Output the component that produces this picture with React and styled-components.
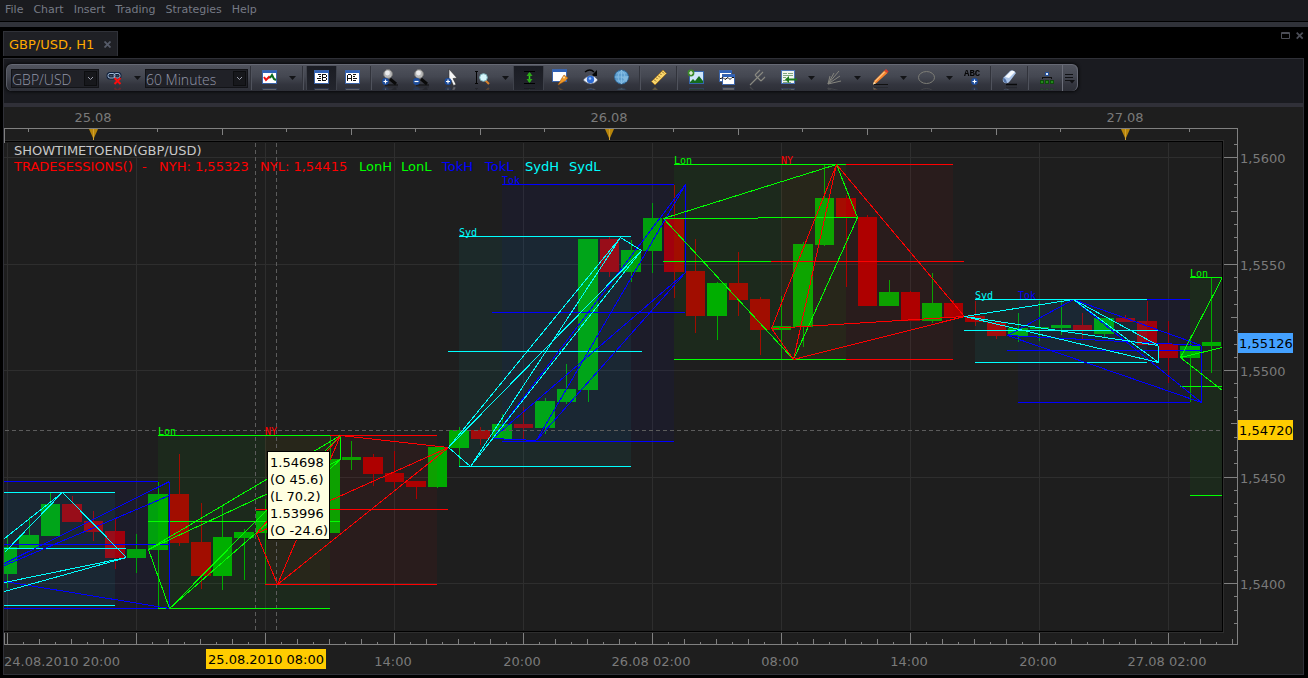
import React from 'react';
import styled, { createGlobalStyle } from 'styled-components';

const menus = ['File', 'Chart', 'Insert', 'Trading', 'Strategies', 'Help'];

const colors = {
  lon: '#00ff00',
  ny: '#ff0000',
  tok: '#0000ff',
  syd: '#00ffff',
};

// one candle per hour: body top, body bottom, wick top, wick bottom, up (1) or down (0)
const candles = [
  [547, 574, 537, 588, 1],
  [535, 548, 517, 548, 1],
  [504, 536, 493, 536, 1],
  [504, 522, 496, 522, 0],
  [521, 532, 511, 541, 0],
  [531, 558, 518, 569, 0],
  [549, 558, 534, 573, 1],
  [494, 550, 482, 608, 1],
  [494, 543, 454, 546, 0],
  [542, 576, 503, 589, 0],
  [537, 576, 505, 590, 1],
  [532, 538, 529, 580, 1],
  [511, 533, 499, 584, 1],
  [500, 512, 490, 530, 1],
  [490, 505, 480, 530, 0],
  [459, 533, 435, 533, 1],
  [457, 460, 441, 470, 1],
  [457, 474, 454, 486, 0],
  [473, 482, 451, 488, 0],
  [481, 487, 481, 499, 0],
  [447, 487, 447, 488, 1],
  [430, 448, 427, 466, 1],
  [430, 439, 427, 445, 0],
  [424, 439, 414, 439, 1],
  [424, 428, 407, 440, 0],
  [401, 428, 398, 434, 1],
  [389, 402, 364, 404, 1],
  [239, 390, 239, 402, 1],
  [239, 272, 237, 277, 0],
  [250, 272, 240, 282, 1],
  [218, 251, 203, 273, 1],
  [219, 272, 185, 298, 0],
  [271, 316, 239, 333, 0],
  [283, 316, 282, 340, 1],
  [283, 300, 252, 316, 0],
  [299, 330, 297, 355, 0],
  [326, 330, 296, 359, 1],
  [244, 327, 242, 347, 1],
  [198, 245, 165, 246, 1],
  [198, 217, 195, 287, 0],
  [217, 306, 215, 306, 0],
  [292, 306, 280, 306, 1],
  [292, 321, 291, 321, 0],
  [303, 321, 273, 323, 1],
  [303, 317, 300, 317, 0],
  [316, 322, 301, 326, 0],
  [322, 336, 322, 339, 0],
  [328, 336, 313, 342, 1],
  [327, 329, 301, 341, 1],
  [325, 328, 300, 335, 1],
  [325, 331, 313, 339, 0],
  [318, 334, 318, 338, 1],
  [318, 322, 315, 322, 0],
  [321, 345, 301, 345, 0],
  [344, 358, 321, 383, 0],
  [346, 358, 336, 402, 1],
  [342, 346, 278, 373, 1],
];

// box: left, right, high, low; mid: left, right, y; lines: x1, y1, x2, y2
const sessions = [
  {
    type: 'tok',
    box: [4, 158, 481, 608],
    mid: [4, 169, 544],
    lines: [
      [4, 563, 169, 481],
      [4, 565, 169, 495],
      [4, 581, 169, 608],
      [169, 481, 169, 608],
    ],
  },
  {
    type: 'syd',
    box: [4, 115, 492, 605],
    mid: [4, 126, 548],
    lines: [
      [4, 538, 62, 492],
      [4, 552, 62, 492],
      [62, 492, 126, 557],
      [4, 582, 126, 557],
      [4, 591, 126, 557],
    ],
  },
  {
    type: 'lon',
    label: 'Lon',
    box: [158, 330, 435, 608],
    mid: [148, 340, 521],
    points: [[148, 549], [169, 608], [340, 435], [340, 459]],
  },
  {
    type: 'ny',
    label: 'NY',
    box: [265, 437, 435, 584],
    mid: [256, 448, 509],
    points: [[256, 533], [277, 584], [340, 435], [448, 447]],
  },
  {
    type: 'tok',
    label: 'Tok',
    box: [502, 674, 184, 441],
    mid: [492, 685, 312],
    points: [[492, 438], [536, 440], [685, 184], [685, 272]],
  },
  {
    type: 'syd',
    label: 'Syd',
    box: [459, 631, 236, 466],
    mid: [448, 642, 351],
    points: [[448, 447], [470, 466], [620, 237], [641, 250]],
  },
  {
    type: 'lon',
    label: 'Lon',
    box: [674, 846, 164, 359],
    mid: [663, 771, 261],
    points: [[663, 218], [793, 359], [836, 164], [857, 217]],
  },
  {
    type: 'ny',
    label: 'NY',
    box: [781, 953, 164, 359],
    mid: [771, 964, 261],
    points: [[771, 328], [793, 359], [836, 164], [964, 316]],
  },
  {
    type: 'tok',
    label: 'Tok',
    box: [1018, 1190, 299, 402],
    mid: [1007, 1201, 350],
    points: [[1007, 335], [1201, 402], [1073, 299], [1201, 345]],
  },
  {
    type: 'syd',
    label: 'Syd',
    box: [975, 1147, 299, 362],
    mid: [964, 1158, 330],
    points: [[964, 316], [1158, 362], [1073, 299], [1158, 345]],
  },
  {
    type: 'lon',
    label: 'Lon',
    box: [1190, 1222, 277, 495],
    mid: [1180, 1222, 386],
    lines: [
      [1180, 357, 1222, 277],
      [1180, 357, 1222, 347],
      [1180, 357, 1222, 390],
    ],
  },
];

// London levels cover the New York ones, the New York trend lines cover the London ones
const levelOrder = ['ny', 'lon', 'tok', 'syd'];
const trendOrder = ['tok', 'syd', 'lon', 'ny'];

const legend = [
  [14, 'TRADESESSIONS()', colors.ny],
  [142, '-', colors.ny],
  [159, 'NYH: 1,55323', colors.ny],
  [260, 'NYL: 1,54415', colors.ny],
  [359, 'LonH', colors.lon],
  [401, 'LonL', colors.lon],
  [442, 'TokH', colors.tok],
  [485, 'TokL', colors.tok],
  [525, 'SydH', colors.syd],
  [569, 'SydL', colors.syd],
];

const priceGrid = [
  [157, '1,5600'],
  [264, '1,5550'],
  [370, '1,5500'],
  [477, '1,5450'],
  [583, '1,5400'],
];

const timeLabels = [
  [62, '24.08.2010 20:00'],
  [393, '14:00'],
  [522, '20:00'],
  [651, '26.08 02:00'],
  [780, '08:00'],
  [909, '14:00'],
  [1038, '20:00'],
  [1167, '27.08 02:00'],
];

const dayLabels = [
  [93, '25.08'],
  [609, '26.08'],
  [1125, '27.08'],
];

const tooltipLines = ['1.54698', '(O 45.6)', '(L 70.2)', '1.53996', '(O -24.6)'];

const range = (n) => Array.from({ length: n }, (_, i) => i);

const sortSessions = (order) =>
  [...sessions].sort((a, b) => order.indexOf(a.type) - order.indexOf(b.type));

const sessionLines = ({ lines, points }) => {
  if (lines) return lines;
  const [o, l, h, c] = points;
  return [
    [...o, ...l],
    [...o, ...h],
    [...o, ...c],
    [...l, ...h],
    [...l, ...c],
    [...h, ...c],
  ];
};

const Icon = ({ children, size = 18 }) => (
  <svg width={size} height={size} viewBox="0 0 18 18" fill="none" aria-hidden="true">
    {children}
  </svg>
);

const WindowFrame = ({ x = 1.5, y = 1.5, w = 14, h = 13 }) => (
  <g shapeRendering="crispEdges">
    <rect x={x} y={y} width={w} height={h} fill="#fff" stroke="#3c64a8" />
    <rect x={x} y={y} width={w} height="2" fill="#2f62b8" />
  </g>
);

const PlusBadge = ({ x, y, minus, color = '#1c4c9c' }) => (
  <>
    <circle cx={x} cy={y} r="3.4" fill={color} />
    <path d={`M${x - 2} ${y}h4${minus ? '' : `M${x} ${y - 2}v4`}`} stroke="#fff" strokeWidth="1.2" />
  </>
);

const Magnifier = ({ minus }) => (
  <Icon>
    <path d="M9 10l6 5" stroke="#0a0a0a" strokeWidth="3" />
    <path d="M4 16h13" stroke="#0a0a0a" />
    <circle cx="7" cy="5" r="4.4" fill="#b9b9b9" stroke="#777" />
    <circle cx="6.500" cy="4" r="2.400" fill="#ececec" />
    <PlusBadge x={4.5} y={12.5} minus={minus} />
  </Icon>
);

const LinkIcon = () => (
  <Icon>
    <rect x="2" y="4.500" width="7" height="4.500" rx="2" stroke="#10203c" strokeWidth="3" />
    <rect x="8" y="4.500" width="6" height="4.500" rx="2" stroke="#10203c" strokeWidth="3" />
    <rect x="2" y="4.500" width="7" height="4.500" rx="2" stroke="#9fb8d4" />
    <rect x="8" y="4.500" width="6" height="4.500" rx="2" stroke="#9fb8d4" />
    <path d="M8.500 9l6 6M14.500 9l-6 6" stroke="#ff0d0d" strokeWidth="2" />
  </Icon>
);

const ChartIcon = () => (
  <Icon>
    <WindowFrame />
    <path d="M3 8l2 3 3-3 1 1" stroke="#f01010" strokeWidth="2" />
    <path d="M9 9l2-3 2 4 2 1" stroke="#0b6b1c" strokeWidth="2" />
  </Icon>
);

const BidIcon = () => (
  <Icon>
    <WindowFrame />
    <path
      d="M5 5.500h3M6 7.500h2M4 9.500h4M5 11.500h3M9.500 5v7M10 5.500h3M10 8.500h3M10 11.500h3M13.500 6v2M13.500 9v2"
      stroke="#111"
      shapeRendering="crispEdges"
    />
  </Icon>
);

const AskIcon = () => (
  <Icon>
    <WindowFrame />
    <path
      d="M3.500 6v6M7.500 6v6M4 5.500h3M4 9.500h3M9 5.500h3M9 7.500h2M9 9.500h4M9 11.500h3"
      stroke="#111"
      shapeRendering="crispEdges"
    />
  </Icon>
);

const CursorIcon = () => (
  <Icon>
    <path d="M6 0l8 9-4 .5 3 6-2.500 1L8 11l-2 2z" fill="#f4f4f4" stroke="#333" strokeWidth=".6" />
    <PlusBadge x={5} y={12.5} />
  </Icon>
);

const RangeZoomIcon = () => (
  <Icon>
    <path d="M2.500 2v13M1 2.500h3M1 14.500h3" stroke="#050505" shapeRendering="crispEdges" />
    <path d="M11 11l4 4" stroke="#d9802a" strokeWidth="2" />
    <circle cx="9.500" cy="8.500" r="3.800" fill="#d6f6fb" stroke="#7fb5bd" />
  </Icon>
);

const AutoScaleIcon = () => (
  <Icon>
    <path d="M4 2.500h11M4 14.500h11" stroke="#000" shapeRendering="crispEdges" />
    <path d="M9.500 4v9" stroke="#37d11c" strokeWidth="1.600" />
    <path d="M6.500 7l3-4 3 4zM6.500 10l3 4 3-4z" fill="#2cab18" />
  </Icon>
);

const SettingsIcon = () => (
  <Icon>
    <WindowFrame y={0.5} h={12} />
    <path d="M7 16l4-7 2-3 4 3-3 3z" fill="#f09a28" stroke="#a85a10" strokeWidth=".6" />
    <circle cx="13" cy="8.500" r="1" fill="#ffe3a6" />
  </Icon>
);

const EyeIcon = () => (
  <Icon>
    <path d="M3 3q5-4 9 0" stroke="#050505" strokeWidth="1.300" />
    <path d="M15 1v6H9z" fill="#050505" />
    <path d="M1 11q8-9 15 0-7 8-15 0z" fill="#eef2f8" stroke="#4c5568" strokeWidth=".8" />
    <circle cx="8.500" cy="10.500" r="3.700" fill="#2f6cd4" />
    <circle cx="8" cy="9.500" r="1.300" fill="#9cc4ff" />
  </Icon>
);

const GlobeIcon = () => (
  <Icon>
    <circle cx="8.500" cy="8" r="7" fill="#5f9fd0" stroke="#2f6492" />
    <path
      d="M8.500 1v14M1.500 8h14M3.500 4h10M3.500 12h10M8.500 1q-7 7 0 14M8.500 1q7 7 0 14"
      stroke="#9fd0f0"
      strokeWidth=".5"
    />
    <path d="M8.500 8l7-1-2 6z" fill="#82b9df" />
  </Icon>
);

const RulerIcon = () => (
  <Icon>
    <path d="M1.500 12.500L13 1l3.500 3.500L5 16z" fill="#f9d56b" stroke="#a1701c" strokeWidth=".8" />
    <path d="M4 10.500l2 2M6 8.500l1.500 1.500M8 6.500l2 2M10 4.500l1.500 1.500M12 2.500l2 2" stroke="#6d4a10" strokeWidth=".8" />
  </Icon>
);

const ImageIcon = () => (
  <Icon>
    <rect x="2.500" y="2.500" width="14" height="12" fill="#cfe6fb" stroke="#3465ab" />
    <path d="M3 13l3-3 2 2 4-5 4 5v2H3z" fill="#156b1d" />
    <PlusBadge x={4} y={4} color="#3c8a2a" />
  </Icon>
);

const IndicatorIcon = () => (
  <Icon>
    <WindowFrame x={1.5} y={1.5} w={12} h={11} />
    <WindowFrame x={4.5} y={5.5} w={12} h={10} />
    <path d="M2 9.500h1l2-1 2 2 3-2 2 2 2-2h2" stroke="#111" />
  </Icon>
);

const PitchforkIcon = () => (
  <Icon>
    <path d="M1 16l8-8M6 6l6 6M6 6l5-5M9 8l5-5M12 12l4-4" stroke="#8a8a82" strokeWidth="1.100" />
  </Icon>
);

const TemplateIcon = () => (
  <Icon>
    <rect x="1.500" y="1.500" width="13" height="13" fill="#eff5ef" stroke="#4a74b8" />
    <path d="M3 4.500h4M8 4.500h5M3 6.500h10M3 8.500h3M3 11.500h3M3 13.500h8" stroke="#7fa67f" />
    <path d="M17 10.500H8" stroke="#1b7a1b" strokeWidth="2" />
    <path d="M9 7v7l-4-3.500z" fill="#1b7a1b" />
  </Icon>
);

const FanIcon = () => (
  <Icon>
    <path d="M2 15L4 7M2 15L8 4M2 15L13 2M2 15l12-8M2 15l13-3" stroke="#85857e" />
  </Icon>
);

const PencilIcon = () => (
  <Icon>
    <path d="M2 15.500h14" stroke="#111" />
    <path d="M1 15.500L2.500 11.500 12.500 1.500l3 2.500L5 13.500z" fill="#f6812c" />
    <path d="M3 12.500l9.500-9.500" stroke="#ffc27c" strokeWidth="1.300" />
    <path d="M12.500 1.500L14 0l2.500 2.500L15.500 4z" fill="#e03c2c" />
    <path d="M1 15.500l1-3 2 2z" fill="#f3dca8" />
  </Icon>
);

const EllipseIcon = () => (
  <Icon>
    <ellipse cx="8.500" cy="8.500" rx="8" ry="6" stroke="#7d7d76" />
  </Icon>
);

const TextIcon = () => (
  <Icon>
    <text x="0" y="7" fontSize="9" fontFamily="Liberation Mono, monospace" fontWeight="bold" fill="#050505">
      ABC
    </text>
    <PlusBadge x={10.5} y={12.5} />
  </Icon>
);

const EraserIcon = () => (
  <Icon>
    <path d="M5 15.500h11" stroke="#08090b" strokeWidth="1.500" />
    <path d="M2 9l7-7q3-2 6 2l-6 8q-2 3-5 2-3-1-2-5z" fill="#a9c2e6" />
    <path d="M4 8l6-6q2-1 4 1L8 9z" fill="#f7fbff" />
    <path d="M2 9q3 0 4 5-4 0-4-5z" fill="#5372a4" />
  </Icon>
);

const TreeIcon = () => (
  <Icon>
    <g shapeRendering="crispEdges">
      <path d="M4.500 10V8.500h9V10" stroke="#111" />
      <rect x="7.500" y="3.500" width="3" height="3" fill="#dcecff" stroke="#234f98" />
      <rect x="2.500" y="11.500" width="3" height="3" fill="#258a1c" stroke="#0d4d0b" />
      <rect x="7.500" y="11.500" width="3" height="3" fill="#258a1c" stroke="#0d4d0b" />
      <rect x="12.500" y="11.500" width="3" height="3" fill="#258a1c" stroke="#0d4d0b" />
    </g>
  </Icon>
);

const tools = [
  { name: 'Chart type', icon: <ChartIcon />, menu: true },
  { divider: true },
  { name: 'Bid', icon: <BidIcon />, pressed: true },
  { name: 'Ask', icon: <AskIcon /> },
  { divider: true },
  { name: 'Zoom in', icon: <Magnifier /> },
  { name: 'Zoom out', icon: <Magnifier minus /> },
  { name: 'Cursor', icon: <CursorIcon /> },
  { name: 'Zoom to range', icon: <RangeZoomIcon />, menu: true },
  { name: 'Auto scale', icon: <AutoScaleIcon />, pressed: true },
  { name: 'Chart settings', icon: <SettingsIcon /> },
  { name: 'Show or hide', icon: <EyeIcon /> },
  { name: 'Sessions', icon: <GlobeIcon /> },
  { divider: true },
  { name: 'Measure', icon: <RulerIcon /> },
  { divider: true },
  { name: 'Save image', icon: <ImageIcon /> },
  { name: 'Add indicator', icon: <IndicatorIcon /> },
  { name: 'Pitchfork', icon: <PitchforkIcon /> },
  { name: 'Templates', icon: <TemplateIcon />, menu: true },
  { name: 'Fan', icon: <FanIcon />, menu: true },
  { name: 'Line', icon: <PencilIcon />, menu: true },
  { name: 'Shape', icon: <EllipseIcon />, menu: true },
  { name: 'Text', icon: <TextIcon /> },
  { divider: true },
  { name: 'Clear', icon: <EraserIcon /> },
  { divider: true },
  { name: 'Objects', icon: <TreeIcon /> },
];

const MenuArrow = ({ label }) => (
  <ArrowButton type="button" aria-label={`${label} options`}>
    <svg width="7" height="4" viewBox="0 0 7 4">
      <path d="M0 0h7L3.500 4z" fill="#131417" />
    </svg>
  </ArrowButton>
);

const Combo = ({ label, value, width }) => (
  <ComboBox $width={width}>
    <select aria-label={label} defaultValue={value}>
      <option>{value}</option>
    </select>
    <ComboArrow>
      <svg width="7" height="5" viewBox="0 0 7 5" fill="none">
        <path d="M1 1l2.500 2.500L6 1" stroke="#9a9daa" />
      </svg>
    </ComboArrow>
  </ComboBox>
);

const SessionLevels = ({ session: { type, box, mid } }) => {
  const [left, right, top, bottom] = box;
  return (
    <g fill={colors[type]}>
      <rect x={left} y={top} width={right - left} height="1" />
      <rect x={left} y={bottom} width={right - left} height="1" />
      <rect x={mid[0]} y={mid[2]} width={mid[1] - mid[0]} height="1" />
    </g>
  );
};

const SessionTrends = ({ session }) => (
  <g stroke={colors[session.type]} transform="translate(.5 .5)">
    {sessionLines(session).map(([x1, y1, x2, y2], i) => (
      <line key={i} x1={x1} y1={y1} x2={x2} y2={y2} />
    ))}
  </g>
);

const Axes = () => (
  <g transform="translate(.5 .5)" stroke="#808080" fill="none" shapeRendering="crispEdges">
    <path d="M4 142V128H1237V644H4V632" />
    {range(19).map((i) => (
      <path key={i} d={`M${Math.floor(28.5 + i * 64.5)} 128v${i % 2 ? 6 : 3}`} />
    ))}
    {range(37).map((i) => {
      const y = Math.round(144 + i * 13.3);
      const step = (i + 7) % 8;
      return <path key={i} d={`M1237 ${y}h-${step === 0 ? 14 : step === 4 ? 7 : 4}`} />;
    })}
    {range(77).map((i) => {
      const x = Math.floor(7 + i * 16.125);
      return <path key={i} d={`M${x} 644v-${i % 8 === 0 ? 12 : i % 2 === 0 ? 6 : 3}`} />;
    })}
  </g>
);

const PriceChart = () => (
  <ChartSvg viewBox="4 107 1299 567" role="img" aria-label="GBP/USD hourly chart">
    <defs>
      <clipPath id="plot">
        <rect x="4" y="142" width="1218" height="489" />
      </clipPath>
    </defs>

    <rect x="4" y="140" width="1220" height="1" fill="#2e2e2e" />
    <rect x="1223" y="140" width="1" height="493" fill="#2e2e2e" />
    <rect x="4" y="632" width="1220" height="1" fill="#2e2e2e" />
    <path d="M4 141.500H1222.500V631.500H4" stroke="#000" fill="none" shapeRendering="crispEdges" />

    <g clipPath="url(#plot)" shapeRendering="crispEdges">
      {priceGrid.map(([y]) => (
        <rect key={y} x="4" y={y} width="1217" height="1" fill="#2e2e2e" />
      ))}
      {range(10).map((i) => (
        <rect key={i} x={7 + i * 129} y="143" width="1" height="487" fill="#2e2e2e" />
      ))}

      {candles.map(([top, bottom, high, low, up], i) => {
        const x = Math.floor(7.5 + i * 21.5);
        const odd = i % 2;
        return (
          <g key={i} fill={up ? '#00aa00' : '#aa0000'}>
            <rect x={x} y={high} width="1" height={low - high} />
            <rect x={x - (odd ? 10 : 9)} y={top} width={odd ? 20 : 19} height={bottom - top} />
          </g>
        );
      })}

      {sessions.map(({ type, box: [left, right, top, bottom] }, i) => (
        <rect
          key={i}
          x={left}
          y={top}
          width={right - left}
          height={bottom - top}
          fill={colors[type]}
          fillOpacity=".05"
        />
      ))}

      <g transform="translate(.5 .5)" stroke="#5c5c5c" strokeDasharray="4 3">
        <path d="M255 142V631" />
        <path d="M276 142V631" />
        <path d="M4 430H1222" />
      </g>

      {sortSessions(levelOrder).map((session, i) => (
        <SessionLevels key={i} session={session} />
      ))}
      {sortSessions(trendOrder).map((session, i) => (
        <SessionTrends key={i} session={session} />
      ))}
    </g>

    <SessionLabels>
      {sessions
        .filter((s) => s.label)
        .map((s, i) => (
          <text key={i} x={s.box[0]} y={s.box[2]} fill={colors[s.type]}>
            {s.label}
          </text>
        ))}
    </SessionLabels>

    <Axes />

    {dayLabels.map(([x]) => (
      <g key={x}>
        <path d={`M${x - 4} 129h9l-4 9h-1z`} fill="#b8860b" />
        <path d={`M${x}.5 129v11`} stroke="#d0a030" />
      </g>
    ))}

    <ChartText>
      <text x="14" y="155" fill="#c8c8c8">
        SHOWTIMETOEND(GBP/USD)
      </text>
      {legend.map(([x, text, color]) => (
        <text key={x} x={x} y="171" fill={color}>
          {text}
        </text>
      ))}
      {priceGrid.map(([y, text]) => (
        <text key={y} x="1240" y={y + 6}>
          {text}
        </text>
      ))}
      {dayLabels.map(([x, text]) => (
        <text key={x} x={x} y="122" textAnchor="middle">
          {text}
        </text>
      ))}
      {timeLabels.map(([x, text]) => (
        <text key={x} x={x} y="666" textAnchor="middle">
          {text}
        </text>
      ))}

      <rect x="206" y="649" width="120" height="20" fill="#ffcc00" />
      <text x="266" y="664" textAnchor="middle" fill="#000">
        25.08.2010 08:00
      </text>
      <rect x="1238" y="333" width="55" height="20" fill="#44a1ff" />
      <text x="1239" y="348" fill="#000">
        1,55126
      </text>
      <rect x="1238" y="420" width="55" height="20" fill="#ffcc00" />
      <text x="1239" y="435" fill="#000">
        1,54720
      </text>

      <rect x="267.500" y="451.500" width="62" height="88" fill="#ffffe1" stroke="#000" />
      {tooltipLines.map((text, i) => (
        <text key={text} x="270" y={467 + i * 17} fill="#000">
          {text}
        </text>
      ))}
    </ChartText>
  </ChartSvg>
);

const App = () => {
  return (
    <>
      <GlobalStyle />
      <MenuBar>
        {menus.map((menu) => (
          <MenuItem key={menu} type="button">
            {menu}
          </MenuItem>
        ))}
      </MenuBar>

      <TabBar>
        <Tab>
          <TabTitle type="button">GBP/USD, H1</TabTitle>
          <WindowButton type="button" aria-label="Close tab">
            <svg width="7" height="7" viewBox="0 0 7 7">
              <path d="M.5.5l6 6M6.500.5l-6 6" stroke="#565b69" strokeWidth="1.800" />
            </svg>
          </WindowButton>
        </Tab>
        <WindowControls>
          <WindowButton type="button" aria-label="Maximize">
            <svg width="10" height="8" viewBox="0 0 10 8" fill="none">
              <path d="M.5.5h8v6h-8zM0 1.500h9" stroke="#4b4d56" />
            </svg>
          </WindowButton>
          <WindowButton type="button" aria-label="Close">
            <svg width="8" height="8" viewBox="0 0 8 8">
              <path d="M.7.7l6 6M6.700.7l-6 6" stroke="#4b4d56" strokeWidth="1.800" />
            </svg>
          </WindowButton>
        </WindowControls>
      </TabBar>

      <Panel>
        <ToolbarRow>
          <Toolbar>
            <Combo label="Instrument" value="GBP/USD" width={88} />
            <ToolButton type="button" aria-label="Link chart">
              <LinkIcon />
            </ToolButton>
            <MenuArrow label="Link chart" />
            <Combo label="Period" value="60 Minutes" width={103} />
            <Divider />
            {tools.map((tool, i) =>
              tool.divider ? (
                <Divider key={i} />
              ) : (
                <React.Fragment key={i}>
                  <ToolButton type="button" aria-label={tool.name} $pressed={tool.pressed}>
                    {tool.icon}
                  </ToolButton>
                  {tool.menu && <MenuArrow label={tool.name} />}
                </React.Fragment>
              )
            )}
            <OverflowButton type="button" aria-label="More tools">
              <svg width="10" height="11" viewBox="0 0 10 11" fill="none">
                <path d="M0 1.500h8M0 4.500h8M0 7.500h5" stroke="#101114" />
                <path d="M4 7h6l-3 3.500z" fill="#101114" />
              </svg>
            </OverflowButton>
          </Toolbar>
        </ToolbarRow>
        <PriceChart />
      </Panel>
    </>
  );
};

const GlobalStyle = createGlobalStyle`
  * {
    box-sizing: border-box;
  }

  body {
    margin: 0;
    background: #000;
    color: #7a7d88;
    font-family: 'DejaVu Sans', Verdana, sans-serif;
    font-size: 13px;
  }

  button, select {
    margin: 0;
    padding: 0;
    border: 0;
    background: none;
    color: inherit;
    font: inherit;
  }
`;

const MenuBar = styled.nav`
  display: flex;
  align-items: center;
  gap: 10px;
  height: 27px;
  padding: 0 5px 8px;
  background: linear-gradient(#1a1b1f 21px, #000 21px, #000 22px, #303239 22px);
`;

const MenuItem = styled.button`
  font-size: 11px;
  line-height: 18px;
  color: #767a85;
`;

const TabBar = styled.div`
  display: flex;
  justify-content: space-between;
  height: 31px;
  padding: 4px 4px 2px 3px;
`;

const Tab = styled.div`
  display: flex;
  align-items: center;
  gap: 10px;
  padding: 0 6px 0 5px;
  background: #1f2025;
  border: 1px solid #303239;
  border-bottom: 0;
`;

const TabTitle = styled.button`
  color: #ffaa00;
`;

const WindowControls = styled.div`
  display: flex;
  gap: 5px;
  height: 8px;
  margin-top: 1px;
`;

const WindowButton = styled.button`
  display: flex;
  align-items: center;
`;

const Panel = styled.main`
  margin: 0 4px 3px 3px;
  border: 1px solid #2f3037;
  background: #1e1e1e;
`;

const ToolbarRow = styled.div`
  display: flex;
  align-items: flex-start;
  height: 48px;
  padding: 5px 2px 0;
  background: #1a1b20;
  border-bottom: 4px solid #303038;
`;

const Toolbar = styled.div`
  display: flex;
  align-items: center;
  height: 27px;
  padding-left: 4px;
  border-radius: 6px;
  border-top: 1px solid #666974;
  border-left: 1px solid #5b5e68;
  background: linear-gradient(#50535d, #444751 45%, #33353e 75%, #2d2f37);
  box-shadow: 0 0 3px 1px #08090b;
`;

const ComboBox = styled.div`
  display: grid;
  align-items: center;
  width: ${(props) => props.$width}px;
  height: 19px;
  background: #202127;
  border: 1px solid #121317;

  select {
    grid-area: 1 / 1;
    width: 100%;
    appearance: none;
    padding-top: 2px;
    font-family: 'Open Sans', 'DejaVu Sans', sans-serif;
    font-size: 14px;
    font-weight: 300;
    line-height: 15px;
    color: #9296a8;
  }
`;

const ComboArrow = styled.span`
  grid-area: 1 / 1;
  justify-self: end;
  display: flex;
  align-items: center;
  justify-content: center;
  width: 13px;
  height: 15px;
  margin-right: 1px;
  background: #17181c;
  border: 1px solid #0d0e10;
  pointer-events: none;
`;

const ToolButton = styled.button`
  display: flex;
  justify-content: center;
  width: 31px;
  height: 24px;
  padding-top: 3px;
  overflow: hidden;
  background: ${(props) => (props.$pressed ? 'linear-gradient(#1a1c23, #23252d)' : 'none')};
  border: 1px solid ${(props) => (props.$pressed ? '#3f424b' : 'transparent')};
  border-width: 0 1px;

  svg {
    flex: none;
    -webkit-box-reflect: below -2px linear-gradient(transparent, rgba(0, 0, 0, 0.3));
  }
`;

const ArrowButton = styled.button`
  display: flex;
  align-items: center;
  justify-content: center;
  width: 15px;
  height: 24px;
`;

const Divider = styled.span`
  width: 2px;
  height: 24px;
  margin: 0 2px;
  border-left: 1px solid #31333b;
  border-right: 1px solid #4f525c;
`;

const OverflowButton = styled.button`
  display: flex;
  align-items: center;
  justify-content: center;
  width: 16px;
  height: 26px;
  border-left: 1px solid #6b6e79;
  border-right: 1px solid #666974;
  border-radius: 0 6px 6px 0;
`;

const ChartSvg = styled.svg`
  display: block;
  width: 100%;
  height: auto;
`;

const ChartText = styled.g`
  font-family: 'DejaVu Sans', Verdana, sans-serif;
  font-size: 13px;
  fill: #7a7a7a;
`;

const SessionLabels = styled.g`
  font-family: 'DejaVu Sans Mono', monospace;
  font-size: 10px;
`;

export default App;
